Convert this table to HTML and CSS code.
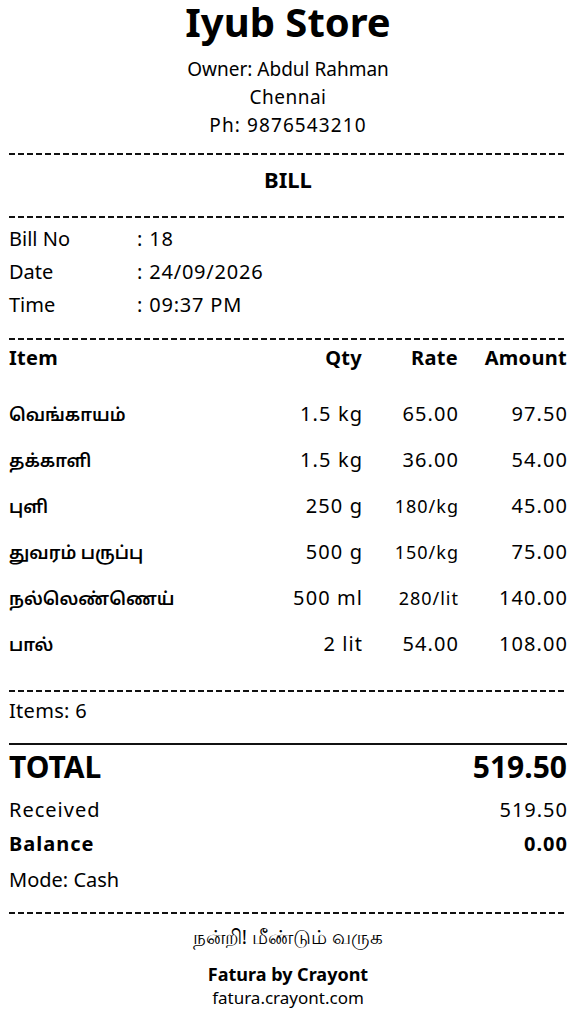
FILE: index.html
```html
<!DOCTYPE html>
<html lang="ta">
<head>
<meta charset="utf-8">
<title>Iyub Store - Bill</title>
<link rel="stylesheet" href="styles.css">
</head>
<body>
<div class="receipt">
  <header class="shop">
    <h1 class="shop-name">Iyub Store</h1>
    <div class="shop-meta">
      <div>Owner: Abdul Rahman</div>
      <div class="city">Chennai</div>
      <div class="phone">Ph: 9876543210</div>
    </div>
  </header>

  <div class="dash dash-a"></div>
  <div class="doc-title">BILL</div>
  <div class="dash dash-b"></div>

  <div class="info">
    <div class="info-row"><span>Bill No</span><span class="val">: 18</span></div>
    <div class="info-row"><span>Date</span><span class="val">: 24/09/2026</span></div>
    <div class="info-row"><span>Time</span><span class="val">: 09:37 PM</span></div>
  </div>

  <div class="dash dash-c"></div>

  <div class="items">
    <div class="row head"><span>Item</span><span class="r">Qty</span><span class="r">Rate</span><span class="r">Amount</span></div>
    <div class="row item"><span class="ta">வெங்காயம்</span><span class="r n">1.5 kg</span><span class="r n">65.00</span><span class="r n">97.50</span></div>
    <div class="row item"><span class="ta">தக்காளி</span><span class="r n">1.5 kg</span><span class="r n">36.00</span><span class="r n">54.00</span></div>
    <div class="row item"><span class="ta">புளி</span><span class="r n">250 g</span><span class="r n small">180/kg</span><span class="r n">45.00</span></div>
    <div class="row item"><span class="ta">துவரம் பருப்பு</span><span class="r n">500 g</span><span class="r n small">150/kg</span><span class="r n">75.00</span></div>
    <div class="row item"><span class="ta">நல்லெண்ணெய்</span><span class="r n">500 ml</span><span class="r n small">280/lit</span><span class="r n">140.00</span></div>
    <div class="row item"><span class="ta">பால்</span><span class="r n">2 lit</span><span class="r n">54.00</span><span class="r n">108.00</span></div>
  </div>

  <div class="dash dash-d"></div>
  <div class="count">Items: 6</div>
  <div class="solid"></div>

  <div class="totals">
    <div class="line total"><span>TOTAL</span><span>519.50</span></div>
    <div class="line wide"><span>Received</span><span>519.50</span></div>
    <div class="line wide bold"><span>Balance</span><span>0.00</span></div>
    <div class="line mode"><span>Mode: Cash</span></div>
  </div>

  <div class="dash dash-e"></div>

  <footer class="foot">
    <div class="thanks">நன்றி! மீண்டும் வருக</div>
    <div class="brand">Fatura by Crayont</div>
    <div class="url">fatura.crayont.com</div>
  </footer>
</div>
</body>
</html>
```

FILE: styles.css
```css
html, body {
  margin: 0;
  padding: 0;
  background: #fff;
}
body {
  font-family: "Noto Sans", sans-serif;
  color: #000;
}
.receipt {
  padding: 0 9px;
  display: flex;
  flex-direction: column;
}
.shop {
  text-align: center;
}
.shop-name {
  margin: 0;
  font-size: 40px;
  line-height: 44px;
  font-weight: 700;
}
.shop-meta {
  margin-top: 11px;
  font-size: 19px;
  line-height: 28px;
}
.city { letter-spacing: 0.5px; }
.phone { letter-spacing: 1.1px; }
.dash {
  height: 2px;
  width: 555px;
  background: repeating-linear-gradient(to right, #111 0 6px, transparent 6px 9px);
}
.dash-a { margin-top: 14px; }
.dash-b { margin-top: 23px; }
.dash-c { margin-top: 17px; }
.dash-d { margin-top: 23px; }
.dash-e { margin-top: 15px; }

.doc-title {
  margin-top: 10px;
  text-align: center;
  font-weight: 700;
  font-size: 22px;
  line-height: 28px;
}
.info {
  margin-top: 4px;
  font-size: 20px;
  line-height: 33px;
}
.info-row {
  display: grid;
  grid-template-columns: 128px 1fr;
}
.val { letter-spacing: 0.8px; }
.items {
  margin-top: 4px;
  display: flex;
  flex-direction: column;
}
.row {
  display: grid;
  grid-template-columns: 1fr 100px 96px 109px;
  align-items: center;
  font-size: 20px;
}
.row.head {
  font-weight: 700;
  line-height: 28px;
  margin-bottom: 19px;
  letter-spacing: 0.3px;
}
.row.item {
  height: 46px;
  line-height: 46px;
}
.r { text-align: right; }
.n {
  letter-spacing: 1.1px;
  margin-right: -1.1px;
}
.small {
  font-size: 18px;
  letter-spacing: 1px;
  margin-right: -1px;
}
.ta {
  font-family: "Noto Sans Tamil", "Noto Sans", sans-serif;
  font-weight: 600;
  font-size: 17.5px;
  line-height: 30px;
  padding-top: 6px;
}
.count {
  margin-top: 5px;
  font-size: 20px;
  line-height: 28px;
  letter-spacing: 0.3px;
}
.solid {
  margin-top: 18px;
  height: 2px;
  background: #111;
}
.totals {
  display: flex;
  flex-direction: column;
}
.line {
  display: flex;
  justify-content: space-between;
  font-size: 20px;
  line-height: 34px;
}
.line.wide { letter-spacing: 1px; }
.line.wide span:last-child { margin-right: -1px; }
.line.total {
  margin-top: 2px;
  font-size: 30px;
  font-weight: 700;
  line-height: 40px;
  margin-bottom: 6px;
  letter-spacing: 0;
}
.line.bold { font-weight: 700; }
.line.mode { margin-top: 2px; }
.foot {
  text-align: center;
}
.thanks {
  margin-top: 9px;
  font-size: 19.5px;
  line-height: 28px;
}
.brand {
  margin-top: 11px;
  font-size: 18px;
  font-weight: 700;
  line-height: 24px;
}
.url {
  font-size: 17px;
  line-height: 24px;
}
```
